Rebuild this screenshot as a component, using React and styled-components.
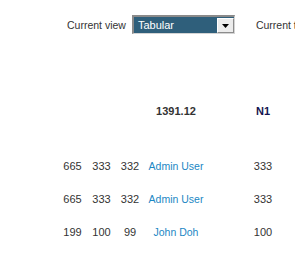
import React from 'react';
import styled, { createGlobalStyle } from 'styled-components';

const GlobalStyle = createGlobalStyle`
    html, body {
        margin: 0;
        padding: 0;
        background: #ffffff;
        overflow: hidden;
    }
    body {
        font-family: "Liberation Sans", Arial, sans-serif;
        font-size: 11px;
        color: #333333;
    }
`;

const Page = styled.div`
    width: 420px;
    padding-top: 15px;
`;

const Toolbar = styled.div`
    display: flex;
    align-items: center;
    height: 19px;
    padding-left: 67px;
`;

const Label = styled.span`
    font-size: 10.5px;
    color: #333333;
    margin-right: ${props => props.gap || 0}px;
    white-space: nowrap;
`;

const Select = styled.div`
    display: flex;
    align-items: center;
    justify-content: space-between;
    box-sizing: border-box;
    width: 103px;
    height: 19px;
    margin-right: 21px;
    background: #2f5f7b;
    border-top: 2px solid #8a8a8a;
    border-left: 2px solid #8a8a8a;
    border-right: 1px solid #d4d4d4;
    border-bottom: 1px solid #d4d4d4;
    color: #ffffff;
    font-size: 11px;
    padding-left: 4px;
`;

const Arrow = styled.div`
    display: flex;
    align-items: center;
    justify-content: center;
    align-self: flex-end;
    width: 17px;
    height: 15px;
    background: #ececec;
    border: 1px solid #ffffff;
    border-right-color: #8c8c8c;
    border-bottom-color: #8c8c8c;
    box-sizing: border-box;
`;

const Grid = styled.table`
    border-collapse: collapse;
    margin-left: 58px;
    margin-top: 66px;
    table-layout: fixed;
`;

const Cell = styled.td`
    width: ${props => props.w}px;
    height: ${props => props.h || 33}px;
    padding: 0;
    text-align: center;
    vertical-align: middle;
    font-size: ${props => props.link ? '10.5px' : '11px'};
    white-space: nowrap;
    color: ${props => props.link ? '#1b87c4' : '#333333'};
    font-weight: ${props => props.bold ? 'bold' : 'normal'};
`;

const Navy = styled.span`
    color: #141450;
    font-weight: bold;
`;

const rows = [
    { a: 665, b: 333, c: 332, name: 'Admin User', n: 333 },
    { a: 665, b: 333, c: 332, name: 'Admin User', n: 333 },
    { a: 199, b: 100, c: 99, name: 'John Doh', n: 100 },
];

const widths = [29, 29, 28, 64, 110];

export default function App() {
    return (
        <Page>
            <GlobalStyle />
            <Toolbar>
                <Label gap={6}>Current view</Label>
                <Select>
                    <span>Tabular</span>
                    <Arrow>
                        <svg width="7" height="4" viewBox="0 0 7 4">
                            <path d="M0 0 L7 0 L3.5 4 Z" fill="#000" />
                        </svg>
                    </Arrow>
                </Select>
                <Label>Current time</Label>
            </Toolbar>
            <Grid>
                <tbody>
                    <tr>
                        <Cell w={widths[0]} h={22} />
                        <Cell w={widths[1]} h={22} />
                        <Cell w={widths[2]} h={22} />
                        <Cell w={widths[3]} h={22} bold>1391.12</Cell>
                        <Cell w={widths[4]} h={22}><Navy>N1</Navy></Cell>
                    </tr>
                    <tr><Cell h={27} colSpan={5} /></tr>
                    {rows.map((r, i) => (
                        <tr key={i}>
                            <Cell w={widths[0]}>{r.a}</Cell>
                            <Cell w={widths[1]}>{r.b}</Cell>
                            <Cell w={widths[2]}>{r.c}</Cell>
                            <Cell w={widths[3]} link>{r.name}</Cell>
                            <Cell w={widths[4]}>{r.n}</Cell>
                        </tr>
                    ))}
                </tbody>
            </Grid>
        </Page>
    );
}
